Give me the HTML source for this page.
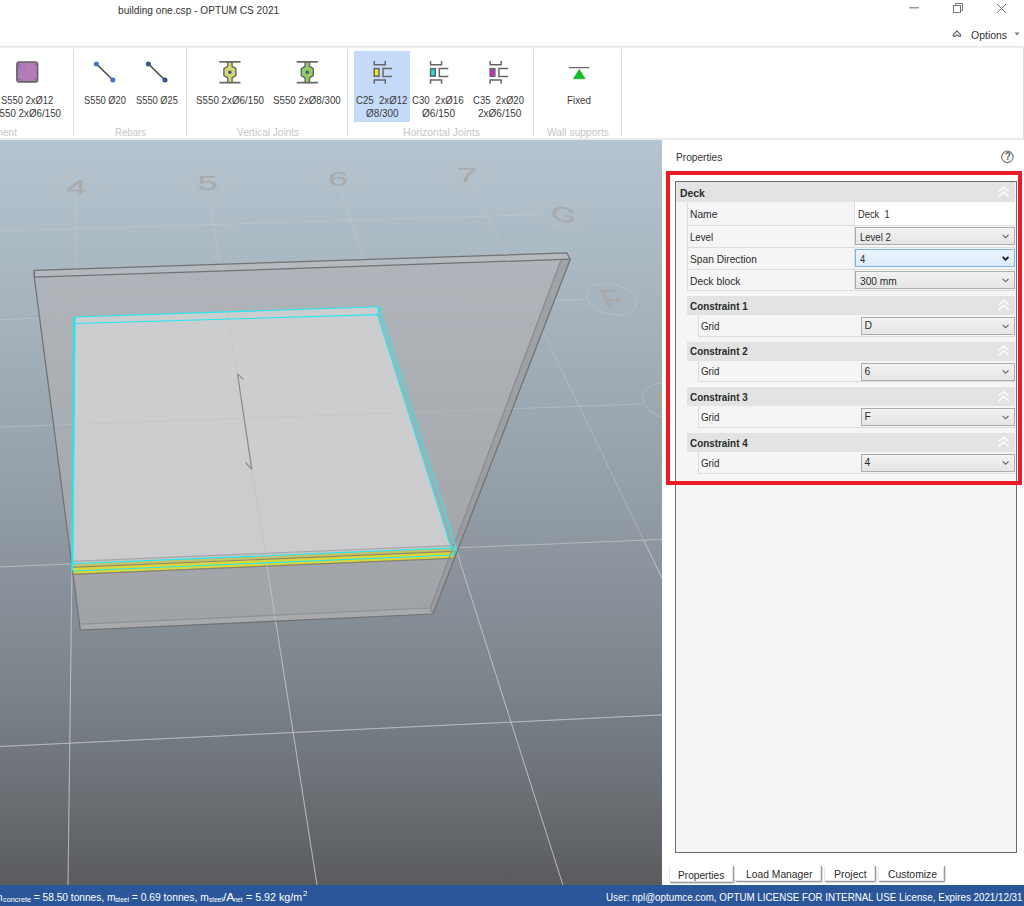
<!DOCTYPE html>
<html lang="en">
<head>
<meta charset="utf-8">
<title>building one.csp - OPTUM CS 2021</title>
<style>
*{box-sizing:border-box;margin:0;padding:0}
html,body{width:1024px;height:906px;overflow:hidden;background:#fff}
body{position:relative;font-family:"Liberation Sans",sans-serif;font-size:11px;color:#333}
.abs{position:absolute}
.x{position:absolute;white-space:pre;transform-origin:0 50%;z-index:3}
#rtop{left:0;top:46px;width:1024px;height:2px;background:linear-gradient(#e6e6e6 50%,#f1f1f1 50%)}
#rbot{left:0;top:138px;width:1024px;height:2px;background:#ebebeb}
#rright{left:1023px;top:47px;width:1px;height:91px;background:#dadada}
.sep{position:absolute;top:49px;width:1px;height:87px;background:#dcdcdc}
#sel{left:354px;top:51px;width:56px;height:71px;background:#c5dbfa}
#vp{left:0;top:140px;width:662px;height:745px}
#status{left:0;top:885px;width:1024px;height:21px;background:#2b579a}
#redbox{left:666px;top:171px;width:356px;height:314px;border:4px solid #ed1c24;z-index:5}
#pbox{left:675px;top:181px;width:342px;height:672px;border:1px solid #6e6e6e;background:#f5f5f5}
.hdr{position:absolute;background:#e3e3e3;height:19px}
.row{position:absolute;border-left:1px solid #dcdcdc;border-bottom:1px solid #dcdcdc;background:#f5f5f5}
.vdiv{position:absolute;width:1px;background:#dcdcdc}
.combo{position:absolute;border:1px solid #adadad;background:linear-gradient(#f2f2f2,#e5e5e5);height:18px}
.combo.f{border-color:#7eb4ea;background:linear-gradient(#ebf4fc,#dcecfc)}
.tab{position:absolute;background:#fff;border-radius:0 0 2px 2px;border-right:1px solid #9c9c9c;border-bottom:1px solid #9c9c9c;box-shadow:1px 1px 1px #d8d8d8, inset -1px -1px 0 #e4e4e4}
</style>
</head>
<body>
<!-- TITLE BAR CONTROLS -->
<svg class="abs" style="left:900px;top:0" width="124" height="46" viewBox="900 0 124 46">
  <line x1="909" y1="7.8" x2="919" y2="7.8" stroke="#777" stroke-width="1.1"/>
  <rect x="953.5" y="5.5" width="7" height="7" fill="none" stroke="#777" stroke-width="1"/>
  <path d="M955.5 5.5V3.5H962.5V10.5H960.5" fill="none" stroke="#777" stroke-width="1"/>
  <path d="M997 4L1006 13M1006 4L997 13" fill="none" stroke="#777" stroke-width="1"/>
  <path d="M956.9 30.9L960.3 34.6Q961.2 36.3 959.4 36.4Q958.4 36.4 956.9 34.9Q955.4 36.4 954.4 36.4Q952.6 36.3 953.5 34.6Z" fill="none" stroke="#555c66" stroke-width="1.2" stroke-linejoin="round"/>
  <path d="M1014.5 32.5H1019.5L1017 35.5Z" fill="#777"/>
</svg>
<!-- RIBBON -->
<div class="abs" id="rtop"></div>
<div class="abs" id="rright"></div>
<div class="abs" id="sel"></div>
<div class="sep" style="left:73px"></div>
<div class="sep" style="left:186px"></div>
<div class="sep" style="left:347px"></div>
<div class="sep" style="left:533px"></div>
<div class="sep" style="left:621px"></div>
<div class="abs" id="rbot"></div>
<svg class="abs" style="left:0;top:50px" width="640" height="40" viewBox="0 50 640 40">
  <defs>
    <g id="rebar"><line x1="0" y1="0" x2="16.5" y2="16" stroke="#4a4a4a" stroke-width="1.6"/></g>
    <path id="vjb" d="M8.4 0V4.4L4.6 6.8V13.7L8.4 15.9V20.7H12.8V15.9L16.6 13.7V6.8L12.8 4.4V0Z" stroke="#62666c" stroke-width="1.4"/>
    <path id="vj" d="M0 0H21.2M0 20.7H21.2" stroke="#696969" stroke-width="1.8" fill="none"/>
    <g id="hj" fill="none" stroke="#676767" stroke-width="1.5">
      <path d="M0.25 0V3.75H11.25V0"/>
      <path d="M0.25 22.9V19.1H11.25V22.9"/>
      <path d="M18 7.5H9V15.6H18"/>
    </g>
  </defs>
  <!-- purple section -->
  <rect x="16.95" y="62" width="20.6" height="19.8" rx="2.4" ry="2.4" fill="#b57bb6" stroke="#646464" stroke-width="1.7"/>
  <g fill="#5a55dd"><circle cx="18.8" cy="64.2" r=".7"/><circle cx="20.6" cy="65.6" r=".6"/><circle cx="18.6" cy="67.5" r=".7"/><circle cx="21" cy="69" r=".6"/><circle cx="25" cy="66.8" r=".6"/><circle cx="34.6" cy="64.5" r=".6"/><circle cx="36.2" cy="64.6" r=".6"/><circle cx="19.4" cy="79.4" r=".7"/><circle cx="20.8" cy="80.2" r=".5"/><circle cx="35" cy="79.2" r=".7"/><circle cx="36" cy="78" r=".5"/></g>
  <!-- rebars -->
  <use href="#rebar" x="96.4" y="64"/>
  <circle cx="96.4" cy="64" r="2.5" fill="#4472c4"/><circle cx="112.8" cy="80" r="2.5" fill="#4472c4"/>
  <use href="#rebar" x="148.4" y="64"/>
  <circle cx="148.4" cy="64" r="2.5" fill="#2f5597"/><circle cx="165" cy="80" r="2.5" fill="#2f5597"/>
  <!-- vertical joints -->
  <g transform="translate(219.3,61.9)"><use href="#vjb" fill="#d6d76e"/><use href="#vj"/><circle cx="10.6" cy="10.4" r="1.8" fill="#46568a"/></g>
  <g transform="translate(296.7,61.9)"><use href="#vjb" fill="#93cc62"/><use href="#vj"/><circle cx="10.6" cy="10.4" r="1.8" fill="#46568a"/></g>
  <!-- horizontal joints -->
  <g transform="translate(374,60.9)"><rect x="0.25" y="7.75" width="4.7" height="7.6" fill="#efec15" stroke="#62656e" stroke-width="1.5"/><use href="#hj"/></g>
  <g transform="translate(430.3,60.9)"><rect x="0.25" y="7.75" width="4.7" height="7.6" fill="#1fd8e8" stroke="#62656e" stroke-width="1.5"/><use href="#hj"/></g>
  <g transform="translate(489.9,60.9)"><rect x="0.25" y="7.75" width="4.7" height="7.6" fill="#e01fe0" stroke="#62656e" stroke-width="1.5"/><use href="#hj"/></g>
  <!-- fixed support -->
  <line x1="569" y1="67.6" x2="589.4" y2="67.6" stroke="#6a6a6a" stroke-width="1.3"/>
  <path d="M579.3 69.3L585.2 78.8H573.4Z" fill="#0dc024" stroke="#2c9a38" stroke-width="0.6"/>
</svg>
<!-- VIEWPORT -->
<svg class="abs" id="vp" viewBox="0 140 662 745" width="662" height="745">
  <defs>
    <linearGradient id="bg" x1="0" y1="0" x2="0" y2="1">
      <stop offset="0" stop-color="#b5c4d0"/>
      <stop offset="0.282" stop-color="#a2afb8"/>
      <stop offset="0.497" stop-color="#929ca5"/>
      <stop offset="0.752" stop-color="#7a8189"/>
      <stop offset="0.886" stop-color="#696e73"/>
      <stop offset="1" stop-color="#5a5b5f"/>
    </linearGradient>
    <linearGradient id="gg" gradientUnits="userSpaceOnUse" x1="0" y1="140" x2="0" y2="885">
      <stop offset="0" stop-color="#d2d2d2" stop-opacity="0.55"/>
      <stop offset="0.25" stop-color="#cecece" stop-opacity="0.75"/>
      <stop offset="0.6" stop-color="#cacaca" stop-opacity="1"/>
      <stop offset="1" stop-color="#c8c8c8" stop-opacity="1"/>
    </linearGradient>
    <g id="grid" fill="none" stroke="url(#gg)" stroke-width="0.95">
      <path d="M76.6 198L68 885"/>
      <path d="M208.9 194L317 885"/>
      <path d="M341.7 190.5L562.9 885"/>
      <path d="M473 186L662 578"/>
      <path d="M540.2 214.5L0 231"/>
      <path d="M586.2 299.3L378.7 306.8L75 317L0 319.6"/>
      <path d="M642.7 404L0 427"/>
      <path d="M662 539.3L456.2 547.8L72.7 563.8L0 566.8"/>
      <path d="M662 714.9L0 746.5"/>
    </g>
    <clipPath id="deckclip"><path d="M75 317L378.7 306.8L456.2 547.8L72.7 563.8Z"/></clipPath>
    <clipPath id="front"><path d="M0 566.8L72.7 563.8L456.2 547.8L662 539.3V885H0Z"/></clipPath>
  </defs>
  <rect x="0" y="140" width="662" height="745" fill="url(#bg)"/>
  <use href="#grid" opacity="0.56"/>
  <!-- grid bubbles -->
  <g fill="none" stroke="#c3bfbf" stroke-width="1" opacity="0.75">
    <ellipse cx="76.5" cy="186.5" rx="21.5" ry="11.8"/>
    <ellipse cx="207.6" cy="182.2" rx="21.5" ry="11.8"/>
    <ellipse cx="338.2" cy="179" rx="21" ry="11.5"/>
    <ellipse cx="467.1" cy="174.7" rx="21.5" ry="11.5"/>
    <ellipse cx="562.6" cy="213.9" rx="23" ry="13" transform="rotate(10 562.6 213.9)"/>
    <ellipse cx="611.4" cy="299.2" rx="25.5" ry="15" transform="rotate(13 611.4 299.2)"/>
    <ellipse cx="670" cy="401.5" rx="28" ry="17.5" transform="rotate(14 670 401.5)"/>
  </g>
  <g font-family="'Liberation Sans',sans-serif" fill="#aba8a7" stroke="#aba8a7" stroke-width="0.25" opacity="0.92" text-anchor="middle">
    <text transform="translate(76.5,194) scale(1.75,1)" font-size="21">4</text>
    <text transform="translate(207.6,189.6) scale(1.75,1)" font-size="21">5</text>
    <text transform="translate(338.2,186.4) scale(1.75,1)" font-size="21">6</text>
    <text transform="translate(467.1,182) scale(1.75,1)" font-size="21">7</text>
    <text transform="translate(562,221.3) rotate(12) scale(1.6,1)" font-size="20.5">G</text>
    <text transform="translate(606.3,308.6) rotate(3) skewX(28) scale(1.25,1)" font-size="27.4" text-anchor="start">F</text>
    <text transform="translate(661.3,414) rotate(3) skewX(28) scale(1.25,1)" font-size="31" text-anchor="start">E</text>
  </g>
  <!-- wall (transparent plate) -->
  <g stroke="none">
    <path d="M34.3 277.2L570.3 259.2L433 614L80.3 630Z" fill="#b3b3b4" fill-opacity="0.6"/>
    <path d="M34.3 270.3L566.8 252.9L570.3 259.2L34.3 277.2Z" fill="#bcbdbe" fill-opacity="0.5"/>
    <path d="M561 260L570.3 259.2L433 614L430.3 608Z" fill="#8e9093" fill-opacity="0.45"/>
    <path d="M81.6 624.1L430.3 608L433 614L80.3 630Z" fill="#b8b9ba" fill-opacity="0.35"/>
  </g>
  <!-- deck -->
  <path d="M75 317L378.7 306.8L377.5 314.6L451.4 548L72.7 563.8Z" fill="#cfd0d2" fill-opacity="0.9"/>
  <use href="#grid" opacity="0.22" clip-path="url(#deckclip)" style="filter:grayscale(1) brightness(0.82)"/>
  <!-- joint strip -->
  <g>
    <path d="M72.7 561.3L456 545.3L456.2 547.8L72.7 563.8Z" fill="#c4c5c7"/>
    <path d="M72.7 561.3L456 545.3" stroke="#a6a7a9" stroke-width="1.2" fill="none"/>
    <path d="M72.7 563.8L456.2 547.8L454.9 551.6L72.7 567.6Z" fill="#c3c16c"/>
    <path d="M72.7 567.4L454.9 551.4" stroke="#8f8d5c" stroke-width="1.2" fill="none"/>
    <path d="M72.7 568L454.8 552L452.5 558L72.7 574Z" fill="#ded539"/>
    <path d="M72.7 574.3L452.4 558.3" stroke="#86866c" stroke-width="1.2" fill="none"/>
  </g>
  <!-- grid in front of wall base -->
  <use href="#grid" opacity="0.56" clip-path="url(#front)"/>
  <!-- wall outlines -->
  <g fill="none" stroke="#727272" stroke-width="1.25">
    <path d="M34.3 270.3L566.8 252.9L570.3 259.2L433 614L80.3 630L34.3 277.2Z"/>
    <path d="M34.3 270.3V277.2L570.3 259.2"/>
    <path d="M561 260L430.3 608L433 614" stroke="#8a8b8d"/>
    <path d="M81.6 624.1L430.3 608" stroke="#8f9092"/>
  </g>
  <!-- deck cyan outlines -->
  <g fill="none" stroke="#1fe9f2" stroke-width="1.1">
    <path d="M75 317L378.7 306.8L456.2 547.8L72.7 563.8Z"/>
    <path d="M75.4 323.5L377.5 314.6L453.5 555L72.7 571"/>
    <path d="M74.3 317L72.2 571" stroke-width="2"/>
    <path d="M378.7 306.8L377.5 314.6M456.2 547.8L453.5 555"/>
  </g>
  <!-- span arrow -->
  <g fill="none" stroke="#8a8b8d" stroke-width="1.2">
    <path d="M237.5 373.9L251.8 469.7"/>
    <path d="M243.3 379.3L237.5 373.9"/>
    <path d="M245.6 462.4L251.8 469.7"/>
  </g>
</svg>
<!-- RIGHT PANEL -->
<svg class="abs" style="left:1000px;top:150px" width="15" height="15" viewBox="0 0 15 15">
  <circle cx="7.4" cy="6.9" r="5.7" fill="none" stroke="#7c7c7c" stroke-width="1.25"/>
</svg>
<span class="x" style="left:1004.7px;top:150.6px;font-size:10px;line-height:12px;color:#5f5f5f;font-weight:bold">?</span>
<div class="abs" id="pbox"></div>
<div class="hdr" style="left:676px;top:182px;width:339px;height:20px"></div>
<!-- Deck rows -->
<div class="row" style="left:687px;top:202px;width:328px;height:24px"></div>
<div class="row" style="left:687px;top:226px;width:328px;height:22px"></div>
<div class="row" style="left:687px;top:248px;width:328px;height:22px"></div>
<div class="row" style="left:687px;top:270px;width:328px;height:21px"></div>
<div class="vdiv" style="left:854px;top:202px;height:88px"></div>
<div class="abs" style="left:855px;top:202px;width:160px;height:23px;background:#fff"></div>
<div class="combo" style="left:855px;top:227px;width:159.5px"></div>
<div class="combo f" style="left:855px;top:249px;width:159.5px"></div>
<div class="combo" style="left:855px;top:271px;width:159.5px"></div>
<!-- Constraints -->
<div class="hdr" style="left:687px;top:296px;width:328px"></div>
<div class="row" style="left:698px;top:315px;width:317px;height:22px"></div>
<div class="combo" style="left:861px;top:317px;width:153.5px"></div>
<div class="hdr" style="left:687px;top:341.5px;width:328px"></div>
<div class="row" style="left:698px;top:360.5px;width:317px;height:21.5px"></div>
<div class="combo" style="left:861px;top:362.5px;width:153.5px"></div>
<div class="hdr" style="left:687px;top:387px;width:328px"></div>
<div class="row" style="left:698px;top:406px;width:317px;height:22px"></div>
<div class="combo" style="left:861px;top:408px;width:153.5px"></div>
<div class="hdr" style="left:687px;top:432.7px;width:328px"></div>
<div class="row" style="left:698px;top:451.7px;width:317px;height:22px"></div>
<div class="combo" style="left:861px;top:453.5px;width:153.5px"></div>
<!-- chevrons + dropdown arrows -->
<svg class="abs" style="left:990px;top:182px;z-index:4" width="26" height="300" viewBox="990 182 26 300">
  <defs>
    <path id="chev" d="M-5 4.6L0 0L5 4.6M-5 9.4L0 4.8L5 9.4" fill="none" stroke="#fff" stroke-width="1.4"/>
    <path id="dd" d="M-2.9 -1.5L0 1.5L2.9 -1.5" fill="none"/>
  </defs>
  <use href="#chev" x="1003.7" y="187"/>
  <use href="#chev" x="1003.7" y="300.5"/>
  <use href="#chev" x="1003.7" y="346"/>
  <use href="#chev" x="1003.7" y="391.5"/>
  <use href="#chev" x="1003.7" y="437.2"/>
  <g stroke="#5c5c5c" stroke-width="1.1">
  <use href="#dd" x="1005.6" y="236.3"/>
  <use href="#dd" x="1005.6" y="280.3"/>
  <use href="#dd" x="1005.6" y="326.3"/>
  <use href="#dd" x="1005.6" y="371.8"/>
  <use href="#dd" x="1005.6" y="417.3"/>
  <use href="#dd" x="1005.6" y="462.8"/>
  </g>
  <use href="#dd" x="1005.6" y="258.3" stroke="#111" stroke-width="1.7"/>
</svg>
<div class="abs" id="redbox"></div>
<!-- tabs -->
<div class="tab" style="left:669px;top:866px;width:65px;height:17px;border-left:1px solid #e6e6e6"></div>
<div class="tab" style="left:735px;top:866px;width:87px;height:16px"></div>
<div class="tab" style="left:824px;top:866px;width:52px;height:16px;border-left:1px solid #e6e6e6"></div>
<div class="tab" style="left:878px;top:866px;width:67px;height:16px;border-left:1px solid #e6e6e6"></div>
<!-- STATUS BAR -->
<div class="abs" id="status"></div>

<!-- TEXT -->
<span class="x" style="left:117.6px;top:2.6px;font-size:10.8px;line-height:14px;color:#333;transform:scaleX(0.939);">building one.csp - OPTUM CS 2021</span>
<span class="x" style="left:971.2px;top:27.8px;font-size:10.8px;line-height:14px;color:#333;transform:scaleX(0.970);">Options</span>
<span class="x" style="left:1.2px;top:92.7px;font-size:10.6px;line-height:14px;color:#3b3b3b;transform:scaleX(0.888);">S550 2xØ12</span>
<span class="x" style="left:-7.4px;top:106.0px;font-size:10.6px;line-height:14px;color:#3b3b3b;transform:scaleX(0.924);">S550 2xØ6/150</span>
<span class="x" style="left:83.5px;top:92.7px;font-size:10.6px;line-height:14px;color:#3b3b3b;transform:scaleX(0.880);">S550 Ø20</span>
<span class="x" style="left:136.1px;top:92.7px;font-size:10.6px;line-height:14px;color:#3b3b3b;transform:scaleX(0.880);">S550 Ø25</span>
<span class="x" style="left:195.6px;top:92.7px;font-size:10.6px;line-height:14px;color:#3b3b3b;transform:scaleX(0.924);">S550 2xØ6/150</span>
<span class="x" style="left:272.8px;top:92.7px;font-size:10.6px;line-height:14px;color:#3b3b3b;transform:scaleX(0.920);">S550 2xØ8/300</span>
<span class="x" style="left:355.5px;top:92.7px;font-size:10.6px;line-height:14px;color:#3b3b3b;transform:scaleX(0.909);">C25  2xØ12</span>
<span class="x" style="left:366.2px;top:106.0px;font-size:10.6px;line-height:14px;color:#3b3b3b;transform:scaleX(0.932);">Ø8/300</span>
<span class="x" style="left:411.8px;top:92.7px;font-size:10.6px;line-height:14px;color:#3b3b3b;transform:scaleX(0.913);">C30  2xØ16</span>
<span class="x" style="left:422.4px;top:106.0px;font-size:10.6px;line-height:14px;color:#3b3b3b;transform:scaleX(0.949);">Ø6/150</span>
<span class="x" style="left:472.7px;top:92.7px;font-size:10.6px;line-height:14px;color:#3b3b3b;transform:scaleX(0.902);">C35  2xØ20</span>
<span class="x" style="left:477.6px;top:106.0px;font-size:10.6px;line-height:14px;color:#3b3b3b;transform:scaleX(0.944);">2xØ6/150</span>
<span class="x" style="left:567.2px;top:92.7px;font-size:10.6px;line-height:14px;color:#3b3b3b;transform:scaleX(0.926);">Fixed</span>
<span class="x" style="left:-48.7px;top:124.7px;font-size:10.6px;line-height:14px;color:#c6c6c6;transform:scaleX(0.958);">Reinforcement</span>
<span class="x" style="left:115.0px;top:124.7px;font-size:10.6px;line-height:14px;color:#c6c6c6;transform:scaleX(0.908);">Rebars</span>
<span class="x" style="left:237.2px;top:124.7px;font-size:10.6px;line-height:14px;color:#c6c6c6;transform:scaleX(0.949);">Vertical Joints</span>
<span class="x" style="left:403.0px;top:124.7px;font-size:10.6px;line-height:14px;color:#c6c6c6;transform:scaleX(0.983);">Horizontal Joints</span>
<span class="x" style="left:547.4px;top:124.7px;font-size:10.6px;line-height:14px;color:#c6c6c6;transform:scaleX(0.972);">Wall supports</span>
<span class="x" style="left:676.0px;top:150.3px;font-size:10.6px;line-height:14px;color:#333;transform:scaleX(0.957);">Properties</span>
<span class="x" style="left:679.6px;top:185.6px;font-size:10.6px;line-height:14px;color:#2b2b2b;font-weight:bold;transform:scaleX(0.983);">Deck</span>
<span class="x" style="left:690.2px;top:207.0px;font-size:10.6px;line-height:14px;color:#2b2b2b;transform:scaleX(0.969);">Name</span>
<span class="x" style="left:690.2px;top:230.0px;font-size:10.6px;line-height:14px;color:#2b2b2b;transform:scaleX(0.912);">Level</span>
<span class="x" style="left:690.2px;top:251.7px;font-size:10.6px;line-height:14px;color:#2b2b2b;transform:scaleX(0.963);">Span Direction</span>
<span class="x" style="left:690.2px;top:273.5px;font-size:10.6px;line-height:14px;color:#2b2b2b;transform:scaleX(0.975);">Deck block</span>
<span class="x" style="left:857.8px;top:207.0px;font-size:10.6px;line-height:14px;color:#2b2b2b;transform:scaleX(0.882);white-space:pre;">Deck  1</span>
<span class="x" style="left:859.6px;top:230.0px;font-size:10.6px;line-height:14px;color:#2b2b2b;transform:scaleX(0.898);">Level 2</span>
<span class="x" style="left:859.6px;top:251.7px;font-size:10.6px;line-height:14px;color:#2b2b2b;transform:scaleX(0.880);">4</span>
<span class="x" style="left:859.6px;top:273.5px;font-size:10.6px;line-height:14px;color:#2b2b2b;transform:scaleX(0.961);">300 mm</span>
<span class="x" style="left:689.8px;top:298.8px;font-size:10.6px;line-height:14px;color:#2b2b2b;font-weight:bold;transform:scaleX(0.933);">Constraint 1</span>
<span class="x" style="left:700.8px;top:318.9px;font-size:10.6px;line-height:14px;color:#2b2b2b;transform:scaleX(0.924);">Grid</span>
<span class="x" style="left:864.6px;top:319.0px;font-size:10.4px;line-height:14px;color:#2b2b2b;">D</span>
<span class="x" style="left:689.8px;top:344.3px;font-size:10.6px;line-height:14px;color:#2b2b2b;font-weight:bold;transform:scaleX(0.933);">Constraint 2</span>
<span class="x" style="left:700.8px;top:364.4px;font-size:10.6px;line-height:14px;color:#2b2b2b;transform:scaleX(0.924);">Grid</span>
<span class="x" style="left:864.6px;top:364.5px;font-size:10.4px;line-height:14px;color:#2b2b2b;">6</span>
<span class="x" style="left:689.8px;top:389.8px;font-size:10.6px;line-height:14px;color:#2b2b2b;font-weight:bold;transform:scaleX(0.933);">Constraint 3</span>
<span class="x" style="left:700.8px;top:409.9px;font-size:10.6px;line-height:14px;color:#2b2b2b;transform:scaleX(0.924);">Grid</span>
<span class="x" style="left:864.6px;top:410.0px;font-size:10.4px;line-height:14px;color:#2b2b2b;">F</span>
<span class="x" style="left:689.8px;top:435.5px;font-size:10.6px;line-height:14px;color:#2b2b2b;font-weight:bold;transform:scaleX(0.933);">Constraint 4</span>
<span class="x" style="left:700.8px;top:455.6px;font-size:10.6px;line-height:14px;color:#2b2b2b;transform:scaleX(0.924);">Grid</span>
<span class="x" style="left:864.6px;top:455.7px;font-size:10.4px;line-height:14px;color:#2b2b2b;">4</span>
<span class="x" style="left:678.2px;top:868.1px;font-size:10.6px;line-height:14px;color:#2b2b2b;transform:scaleX(0.959);">Properties</span>
<span class="x" style="left:746.4px;top:867.1px;font-size:10.6px;line-height:14px;color:#2b2b2b;transform:scaleX(0.973);">Load Manager</span>
<span class="x" style="left:833.5px;top:867.1px;font-size:10.6px;line-height:14px;color:#2b2b2b;transform:scaleX(0.991);">Project</span>
<span class="x" style="left:887.5px;top:867.1px;font-size:10.6px;line-height:14px;color:#2b2b2b;transform:scaleX(0.981);">Customize</span>
<span class="x" style="left:605.5px;top:889.6px;font-size:10.6px;line-height:14px;color:#fff;transform:scaleX(0.924);">User: npl@optumce.com, OPTUM LICENSE FOR INTERNAL USE License, Expires 2021/12/31</span>
<span class="x" style="left:-6.5px;top:889.6px;font-size:10.6px;line-height:14px;color:#fff;transform:scaleX(0.963);">m</span>
<span class="x" style="left:2.5px;top:894.7px;font-size:7.5px;line-height:10px;color:#fff;transform:scaleX(0.976);">concrete</span>
<span class="x" style="left:30.6px;top:889.6px;font-size:10.6px;line-height:14px;color:#fff;transform:scaleX(0.959);white-space:pre;"> = 58.50 tonnes, m</span>
<span class="x" style="left:115.0px;top:894.7px;font-size:7.5px;line-height:10px;color:#fff;transform:scaleX(0.884);">steel</span>
<span class="x" style="left:129.0px;top:889.6px;font-size:10.6px;line-height:14px;color:#fff;transform:scaleX(0.971);white-space:pre;"> = 0.69 tonnes, m</span>
<span class="x" style="left:208.8px;top:894.7px;font-size:7.5px;line-height:10px;color:#fff;transform:scaleX(0.884);">steel</span>
<span class="x" style="left:223.0px;top:889.6px;font-size:10.6px;line-height:14px;color:#fff;transform:scaleX(1.138);">/A</span>
<span class="x" style="left:234.4px;top:894.7px;font-size:7.5px;line-height:10px;color:#fff;transform:scaleX(0.805);">net</span>
<span class="x" style="left:243.4px;top:889.6px;font-size:10.6px;line-height:14px;color:#fff;transform:scaleX(1.009);white-space:pre;"> = 5.92 kg/m</span>
<span class="x" style="left:302.8px;top:888.9px;font-size:7.5px;line-height:10px;color:#fff;transform:scaleX(1.103);">2</span>
</body>
</html>
